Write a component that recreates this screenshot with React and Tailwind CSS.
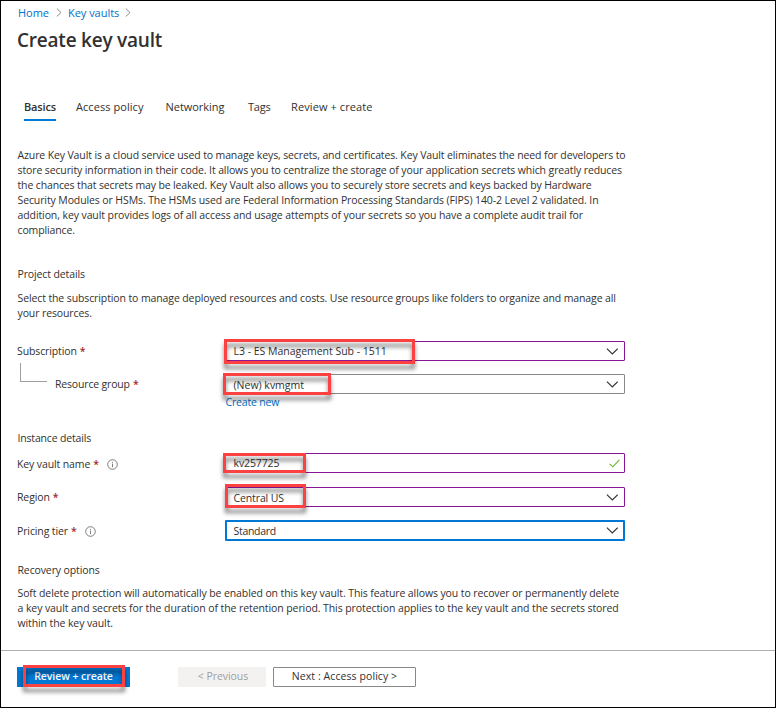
import React from "react";

function Highlight({ className }) {
  return (
    <div
      className={`pointer-events-none absolute border-[3px] border-[#fb4141] drop-shadow-[0_5px_2px_rgba(0,0,0,0.5)] ${className}`}
    />
  );
}

function Separator() {
  return (
    <svg width="6" height="9" viewBox="0 0 6 9" fill="none" stroke="#8a8886" strokeWidth="1">
      <path d="M0.8 0.5L5 4.5L0.8 8.5" />
    </svg>
  );
}

function Chevron() {
  return (
    <svg className="mr-[5px] ml-auto" width="12" height="7" viewBox="0 0 12 7" fill="none" stroke="#323130" strokeWidth="1.1">
      <path d="M0.9 0.7L6.3 6L11.7 0.7" />
    </svg>
  );
}

function Check() {
  return (
    <svg className="mr-[3px] ml-auto" width="11" height="9" viewBox="0 0 11 9" fill="none" stroke="#6bb02c" strokeWidth="1.1">
      <path d="M0.6 4.8L3.8 7.8L10.4 0.8" />
    </svg>
  );
}

function Info() {
  return (
    <svg className="ml-[9px]" width="11" height="11" viewBox="0 0 11 11" fill="none" stroke="#605e5c">
      <circle cx="5.5" cy="5.5" r="4.8" strokeWidth="0.8" />
      <path d="M5.5 4.6V8.2M5.5 2.8V3.8" strokeWidth="0.8" />
    </svg>
  );
}

function Required() {
  return <span className="ml-[3px] w-[5px] font-semibold text-[#a4262c]">*</span>;
}

function Label({ children, info, className = "" }) {
  return (
    <div className={`flex w-[208px] items-center ${className}`}>
      <span>{children}</span>
      <Required />
      {info && <Info />}
    </div>
  );
}

function Field({ border, icon, children, highlight }) {
  return (
    <div className={`relative flex h-5 w-[400px] items-center rounded-[1px] border bg-white pl-[7.5px] pr-px ${border}`}>
      {children}
      {icon}
      {highlight}
    </div>
  );
}

export default function App() {
  return (
    <div className="flex h-[708px] w-[776px] flex-col border border-black bg-white font-['Open_Sans','Noto_Sans',sans-serif] text-[10.5px] leading-[15px] tracking-[-0.12px] whitespace-nowrap text-[#323130]">
      <nav className="ml-[17px] mt-[3px] flex h-4 items-center text-[11px] tracking-[-0.03px] text-[#0072c9]">
        <a>Home</a>
        <span className="ml-[7px] mr-[6px] pt-px"><Separator /></span>
        <a>Key vaults</a>
        <span className="ml-[6px] pt-px"><Separator /></span>
      </nav>
      <h1 className="ml-4 mt-2 h-6 text-[19px] leading-6 font-semibold tracking-[-0.22px]">Create key vault</h1>

      <div className="ml-[23px] mt-[47px] flex h-[22px] text-[11px] leading-4 tracking-[-0.03px]">
        <div className="w-8 border-b-2 border-[#0078d4] font-semibold tracking-[-0.15px]">Basics</div>
        <div className="ml-5 w-[69px] tracking-[0.06px]">Access policy</div>
        <div className="ml-[20.5px] w-[61px]">Networking</div>
        <div className="ml-[21.5px] w-[23px] tracking-[-0.2px]">Tags</div>
        <div className="ml-5 tracking-[0.1px]">Review + create</div>
      </div>

      <p className="ml-[16.5px] mt-[27px]">
        <span className="block tracking-[-0.125px]">Azure Key Vault is a cloud service used to manage keys, secrets, and certificates. Key Vault eliminates the need for developers to</span>
        <span className="block tracking-[-0.115px]">store security information in their code. It allows you to centralize the storage of your application secrets which greatly reduces</span>
        <span className="block tracking-[-0.136px]">the chances that secrets may be leaked. Key Vault also allows you to securely store secrets and keys backed by Hardware</span>
        <span className="block tracking-[-0.108px]">Security Modules or HSMs. The HSMs used are Federal Information Processing Standards (FIPS) 140-2 Level 2 validated. In</span>
        <span className="block tracking-[-0.096px]">addition, key vault provides logs of all access and usage attempts of your secrets so you have a complete audit trail for</span>
        <span className="block">compliance.</span>
      </p>

      <h2 className="ml-[16.5px] mt-[29px]">Project details</h2>
      <p className="ml-[16.5px] mt-[9px] tracking-[-0.112px]">
        Select the subscription to manage deployed resources and costs. Use resource groups like folders to organize and manage all
        <br />
        your resources.
      </p>

      <div className="ml-4 mt-[20px] flex h-5 items-center">
        <Label>Subscription</Label>
        <Field
          border="border-[#881798]"
          icon={<Chevron />}
          highlight={<Highlight className="-left-[2px] -top-[3px] h-[25px] w-[191px]" />}
        >
          <span className="tracking-[-0.02px]">L3 - ES Management Sub - 1511</span>
        </Field>
      </div>
      <div className="ml-4 mt-[13px] flex h-5 items-center">
        <div className="ml-[3px] mr-[8px] h-[19px] w-[27px] -translate-y-3 border-b border-l border-[#a19f9d]" />
        <div className="flex w-[170px]">
          <span className="tracking-[-0.17px]">Resource group</span>
          <Required />
        </div>
        <Field
          border="border-[#8a8886]"
          icon={<Chevron />}
          highlight={<Highlight className="-left-[3px] -top-[2px] h-[22px] w-[108px]" />}
        >
          <span className="pt-0.5 tracking-normal">(New) kvmgmt</span>
        </Field>
      </div>
      <a className="ml-[224.5px] mt-px h-[15px] tracking-[-0.18px] text-[#0072c9]">Create new</a>

      <h2 className="ml-[16.5px] mt-[21px] tracking-[-0.17px]">Instance details</h2>
      <div className="ml-4 mt-[7px] flex h-5 items-center">
        <Label info className="pt-0.5">Key vault name</Label>
        <Field
          border="border-[#881798]"
          icon={<Check />}
          highlight={<Highlight className="-left-[3px] -top-px h-[20px] w-[83px]" />}
        >
          <span>kv257725</span>
        </Field>
      </div>
      <div className="ml-4 mt-[14px] flex h-5 items-center">
        <Label>Region</Label>
        <Field
          border="border-[#881798]"
          icon={<Chevron />}
          highlight={<Highlight className="-left-px -top-[4px] h-[24px] w-[81px]" />}
        >
          <span className="pt-0.5">Central US</span>
        </Field>
      </div>
      <div className="ml-4 mt-[13px] flex h-[21px] items-center">
        <Label info className="pt-px">Pricing tier</Label>
        <div className="flex h-[21px] w-[400px] items-center rounded-[1px] border-2 border-[#0078d4] pl-[6.5px]">
          <span className="pt-px tracking-[-0.3px]">Standard</span>
          <Chevron />
        </div>
      </div>

      <h2 className="ml-[16.5px] mt-[22px]">Recovery options</h2>
      <p className="ml-[16.5px] mt-[8px] tracking-[-0.105px]">
        Soft delete protection will automatically be enabled on this key vault. This feature allows you to recover or permanently delete
        <br />
        <span className="tracking-[-0.085px]">a key vault and secrets for the duration of the retention period. This protection applies to the key vault and the secrets stored</span>
        <br />
        within the key vault.
      </p>

      <footer className="mt-[19px] flex grow border-t border-[#b3b0ad] pl-4 pt-4">
        <button className="relative h-5 w-[113px] bg-[#0078d4] pb-0.5 text-[10.5px] font-semibold tracking-[-0.05px] text-white">
          Review + create
          <Highlight className="-top-[2px] left-[6px] h-[22px] w-[102px]" />
        </button>
        <button className="ml-12 h-5 w-[88px] bg-[#f3f2f1] pb-0.5 pl-0.5 text-[10.5px] font-medium tracking-[-0.05px] text-[#a19f9d]">&lt; Previous</button>
        <button className="ml-[7px] h-5 w-[143px] rounded-[1px] border border-[#8a8886] pb-0.5 text-[10.5px] font-medium tracking-[0.08px]">Next : Access policy &gt;</button>
      </footer>
    </div>
  );
}
